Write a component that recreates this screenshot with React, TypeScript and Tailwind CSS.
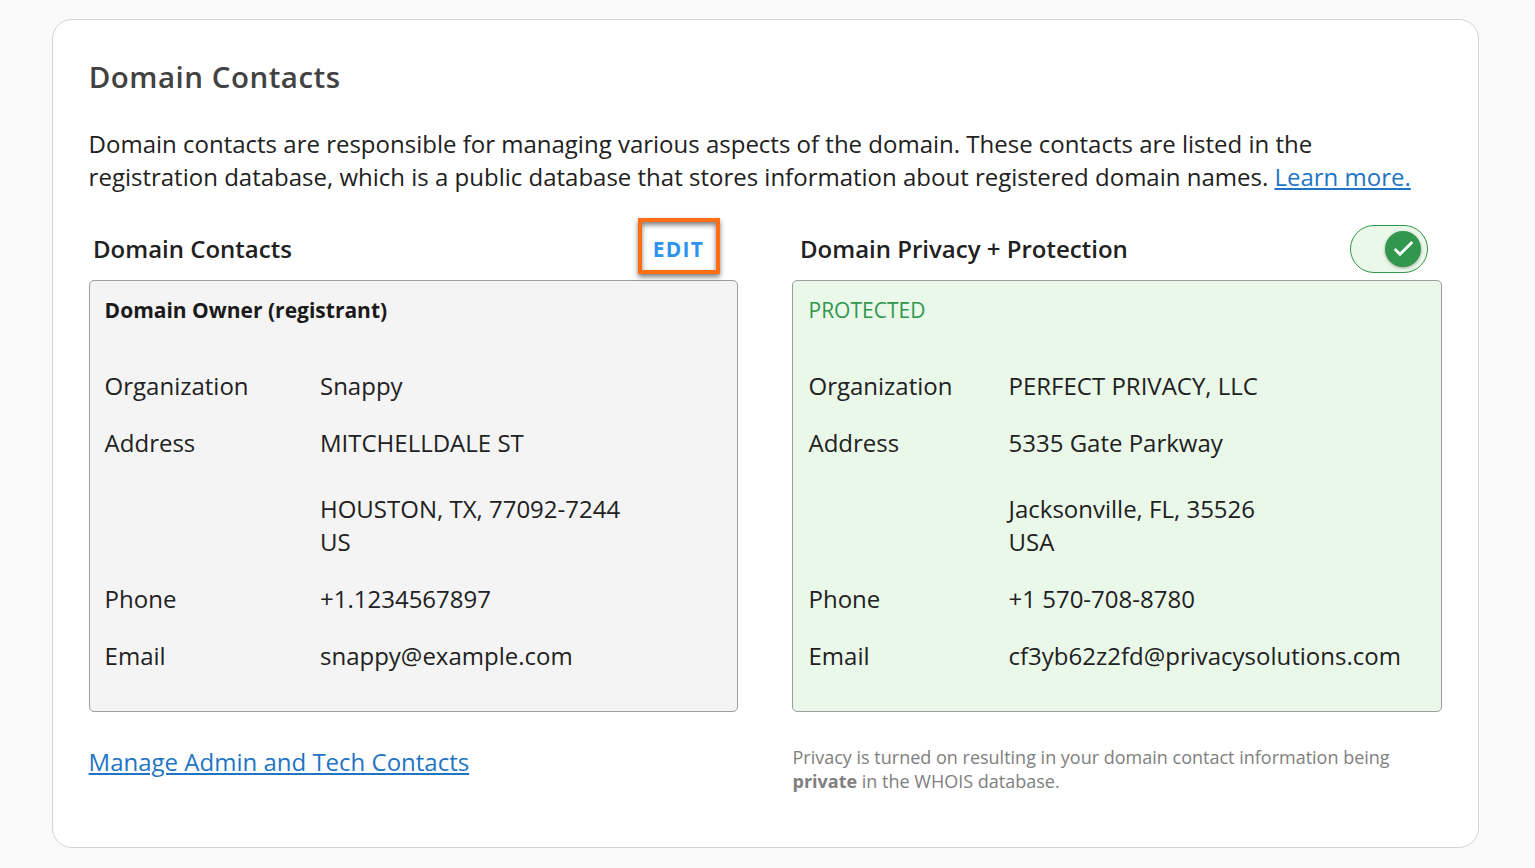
import React from "react";

type Row = { label: string; lines: string[] };

const owner: Row[] = [
  { label: "Organization", lines: ["Snappy"] },
  { label: "Address", lines: ["MITCHELLDALE ST", "", "HOUSTON, TX, 77092-7244", "US"] },
  { label: "Phone", lines: ["+1.1234567897"] },
  { label: "Email", lines: ["snappy@example.com"] },
];

const privacy: Row[] = [
  { label: "Organization", lines: ["PERFECT PRIVACY, LLC"] },
  { label: "Address", lines: ["5335 Gate Parkway", "", "Jacksonville, FL, 35526", "USA"] },
  { label: "Phone", lines: ["+1 570-708-8780"] },
  { label: "Email", lines: ["cf3yb62z2fd@privacysolutions.com"] },
];

function Details({ rows, labelClass }: { rows: Row[]; labelClass: string }) {
  return (
    <dl className="mt-11 flex flex-col gap-6 text-[24px] leading-[33px]">
      {rows.map((row) => (
        <div key={row.label} className="flex">
          <dt className={labelClass}>{row.label}</dt>
          <dd className="whitespace-nowrap">
            {row.lines.map((line, i) => (
              <div key={i} className="h-[33px]">{line}</div>
            ))}
          </dd>
        </div>
      ))}
    </dl>
  );
}

export default function App() {
  return (
    <main className="h-[868px] overflow-hidden bg-[#fafafa] pl-[52px] pt-[19px] font-['Open_Sans',sans-serif] text-[#212121]">
      <section className="h-[829px] w-[1427px] rounded-[20px] border border-[#d3d3da] bg-white pl-9 pt-[36px]">
        <h1 className="-ml-[0.3px] text-[29.5px] font-semibold leading-[42px] tracking-[0.5px] text-[#424242]">Domain Contacts</h1>
        <p className="-ml-[0.4px] mt-[29px] whitespace-nowrap text-[24px] leading-[33px]">
          Domain contacts are responsible for managing various aspects of the domain. These contacts are listed in the
          <br />
          registration database, which is a public database that stores information about registered domain names.{" "}
          <a className="text-[#1f75c3] underline decoration-2 underline-offset-2">Learn more.</a>
        </p>
        <div className="mt-[25px] flex gap-[54px]">
          <div className="w-[649px]">
            <div className="flex h-[62px] items-center justify-between pl-1 pr-[18px]">
              <h2 className="pb-0.5 text-[24px] font-semibold leading-[33px]">Domain Contacts</h2>
              <button className="mb-[7px] h-[56px] w-[82px] border-4 border-[#ff6d15] pr-px pt-[9px] text-[21px] font-bold tracking-[1.3px] text-[#2d93ee] shadow-[0_3px_5px_rgba(0,0,0,0.5),inset_0_3px_5px_rgba(0,0,0,0.5)]">EDIT</button>
            </div>
            <div className="h-[432px] rounded-[5px] border border-[#9e9e9e] bg-[#f4f4f4] pl-[14.6px] pt-[14px]">
              <h3 className="text-[21px] font-bold leading-[30px] text-[#1a1a1a]">Domain Owner (registrant)</h3>
              <Details rows={owner} labelClass="w-[215.4px]" />
            </div>
            <a className="-ml-[0.4px] mt-[33px] block text-[24px] leading-[33px] text-[#1f75c3] underline decoration-2 underline-offset-2">Manage Admin and Tech Contacts</a>
          </div>
          <div className="w-[650px]">
            <div className="flex h-[62px] items-center justify-between pl-2 pr-[14px]">
              <h2 className="pb-0.5 text-[24px] font-semibold leading-[33px]">Domain Privacy + Protection</h2>
              <button role="switch" aria-checked="true" aria-label="Domain privacy" className="flex h-12 w-[78px] items-center justify-end rounded-full border border-[#31974c] bg-[#eaf8ea] pr-[6.5px]">
                <span className="flex size-9 items-center justify-center rounded-full bg-[#31974c] shadow-[0_1px_3px_rgba(0,0,0,0.35)]">
                  <svg className="size-6" viewBox="0 0 24 24" fill="none" stroke="white" strokeWidth="2.8"><path d="m3.7 12 5.3 5.3L21.3 5" /></svg>
                </span>
              </button>
            </div>
            <div className="h-[432px] rounded-[5px] border border-[#9e9e9e] bg-[#eaf8ea] pl-[15.5px] pt-[14px]">
              <h3 className="text-[21px] leading-[30px] text-[#31974c]">PROTECTED</h3>
              <Details rows={privacy} labelClass="w-[200px]" />
            </div>
            <p className="ml-[0.5px] mt-[33px] text-[18px] leading-6 text-[#808080]">
              Privacy is turned on resulting in your domain contact information being
              <br />
              <b>private</b> in the WHOIS database.
            </p>
          </div>
        </div>
      </section>
    </main>
  );
}
